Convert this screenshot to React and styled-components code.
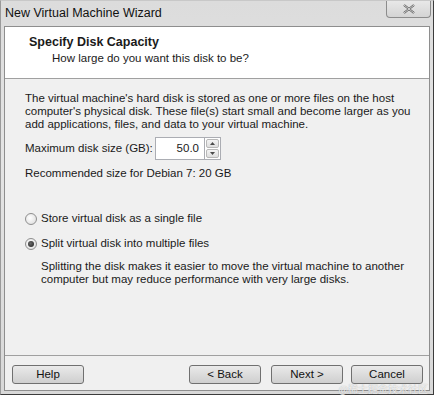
import React from "react";
import styled, { createGlobalStyle } from "styled-components";

const GlobalStyle = createGlobalStyle`
  html, body {
    margin: 0;
    padding: 0;
    background: #ffffff;
  }
  body {
    font-family: "Liberation Sans", Arial, sans-serif;
    font-size: 12px;
    color: #1a1a1a;
  }
`;

const Window = styled.div`
  width: 434px;
  height: 395px;
  box-sizing: border-box;
  border: 1px solid #3c3c3c;
  border-top-color: #c8c8c8;
  border-left-color: #9a9a9a;
  background: linear-gradient(180deg, #dcdcdc 0%, #e4e4e4 40%, #d8d8d8 100%);
  display: flex;
  flex-direction: column;
`;

const TitleBar = styled.div`
  height: 25px;
  display: flex;
  align-items: flex-start;
  justify-content: space-between;
  padding-left: 4px;
`;

const TitleText = styled.span`
  margin-top: 5px;
  font-size: 12.5px;
  color: #111;
`;

const CloseButton = styled.div`
  width: 45px;
  height: 17px;
  margin-right: 2px;
  box-sizing: border-box;
  border: 1px solid #8c8c8c;
  border-top: none;
  border-radius: 0 0 4px 4px;
  background: linear-gradient(180deg, #e8e8e8, #d4d4d4);
  display: flex;
  align-items: center;
  justify-content: center;
`;

const Client = styled.div`
  flex: 1;
  margin: 0 3px 3px 3px;
  border: 1px solid #8e8e8e;
  display: flex;
  flex-direction: column;
  background: #f0f0f0;
`;

const Header = styled.div`
  height: 52px;
  background: #ffffff;
  border-bottom: 1px solid #a0a0a0;
  box-sizing: border-box;
  padding: 8px 0 0 24px;
`;

const HeaderTitle = styled.div`
  font-weight: bold;
  font-size: 12.5px;
  line-height: 15px;
`;

const HeaderSub = styled.div`
  margin-left: 23px;
  font-size: 11.5px;
  line-height: 15px;
  margin-top: 1px;
`;

const Body = styled.div`
  flex: 1;
  padding: 13px 0 0 20px;
  font-size: 11.5px;
  line-height: 13px;
`;

const Paragraph = styled.p`
  margin: 0;
`;

const SizeRow = styled.div`
  display: flex;
  align-items: center;
  margin-top: 6px;
`;

const SizeLabel = styled.span`
  width: 130px;
`;

const NumberBox = styled.div`
  width: 50px;
  height: 23px;
  box-sizing: border-box;
  border: 1px solid #abadb3;
  background: #fff;
  display: flex;
  align-items: center;
  justify-content: flex-end;
  padding-right: 5px;
`;

const Spinner = styled.div`
  width: 16px;
  height: 23px;
  display: flex;
  flex-direction: column;
  box-sizing: border-box;
  border: 1px solid #abadb3;
  border-left: none;
  background: #fff;
  padding: 1px;
  gap: 1px;
`;

const SpinPart = styled.div`
  flex: 1;
  border: 1px solid #b8b8b8;
  border-radius: 2px;
  background: linear-gradient(180deg, #f4f4f4, #dedede);
  display: flex;
  align-items: center;
  justify-content: center;
`;

const Recommended = styled.div`
  margin-top: 7px;
`;

const RadioRow = styled.label`
  display: flex;
  align-items: center;
  gap: 4px;
  margin-top: ${(p) => p.$top}px;
`;

const RadioCircle = styled.span`
  width: 12px;
  height: 12px;
  border-radius: 50%;
  box-sizing: border-box;
  border: 1px solid #8f8f8f;
  background: radial-gradient(circle at 40% 40%, #ffffff 0%, #d8d8d8 100%);
  display: flex;
  align-items: center;
  justify-content: center;

  &::after {
    content: "";
    width: 6px;
    height: 6px;
    border-radius: 50%;
    background: ${(p) => (p.$checked ? "radial-gradient(circle at 40% 40%, #6a6a6a, #1e1e1e)" : "transparent")};
  }
`;

const RadioNote = styled.p`
  margin: 10px 0 0 16px;
`;

const Footer = styled.div`
  height: 35px;
  box-sizing: border-box;
  border-top: 1px solid #a0a0a0;
  display: flex;
  align-items: flex-start;
  padding: 9px 6px 0 7px;
`;

const Spacer = styled.div`
  flex: 1;
`;

const Button = styled.button`
  width: 72px;
  height: 19px;
  margin-left: ${(p) => p.$gap || 0}px;
  box-sizing: border-box;
  border: 1px solid #707070;
  border-radius: 3px;
  background: linear-gradient(180deg, #eaeaea 0%, #dcdcdc 50%, #cfcfcf 100%);
  font-family: "Liberation Sans", Arial, sans-serif;
  font-size: 11.5px;
  color: #111;
  padding: 0;
  line-height: 17px;
`;

const Watermark = styled.span`
  position: absolute;
  right: 6px;
  bottom: 0;
  font-size: 10px;
  line-height: 12px;
  color: rgba(255, 255, 255, 0.8);
  font-family: "Noto Sans CJK SC", sans-serif;
  text-shadow: 0 0 1px #a0a0a0;
`;

const Arrow = ({ up }) => (
  <svg width="5" height="3" viewBox="0 0 5 3">
    <path d={up ? "M0 3 L2.5 0 L5 3 Z" : "M0 0 L2.5 3 L5 0 Z"} fill="#4a4a4a" />
  </svg>
);

export default function App() {
  return (
    <>
      <GlobalStyle />
      <div style={{ position: "relative", width: 434, height: 395 }}>
        <Window>
          <TitleBar>
            <TitleText>New Virtual Machine Wizard</TitleText>
            <CloseButton>
              <svg width="12" height="10" viewBox="0 0 12 10">
                <path
                  d="M1 1 L11 9 M11 1 L1 9"
                  stroke="#555"
                  strokeWidth="2.2"
                  fill="none"
                />
                <path
                  d="M1 1 L11 9 M11 1 L1 9"
                  stroke="#f4f4f4"
                  strokeWidth="0.8"
                  fill="none"
                />
              </svg>
            </CloseButton>
          </TitleBar>
          <Client>
            <Header>
              <HeaderTitle>Specify Disk Capacity</HeaderTitle>
              <HeaderSub>How large do you want this disk to be?</HeaderSub>
            </Header>
            <Body>
              <Paragraph>
                The virtual machine's hard disk is stored as one or more files on the host
                <br />
                computer's physical disk. These file(s) start small and become larger as you
                <br />
                add applications, files, and data to your virtual machine.
              </Paragraph>
              <SizeRow>
                <SizeLabel>Maximum disk size (GB):</SizeLabel>
                <NumberBox>50.0</NumberBox>
                <Spinner>
                  <SpinPart>
                    <Arrow up />
                  </SpinPart>
                  <SpinPart>
                    <Arrow />
                  </SpinPart>
                </Spinner>
              </SizeRow>
              <Recommended>Recommended size for Debian 7: 20 GB</Recommended>
              <RadioRow $top={32}>
                <RadioCircle />
                Store virtual disk as a single file
              </RadioRow>
              <RadioRow $top={12}>
                <RadioCircle $checked />
                Split virtual disk into multiple files
              </RadioRow>
              <RadioNote>
                Splitting the disk makes it easier to move the virtual machine to another
                <br />
                computer but may reduce performance with very large disks.
              </RadioNote>
            </Body>
            <Footer>
              <Button>Help</Button>
              <Spacer />
              <Button>&lt; Back</Button>
              <Button $gap={10}>Next &gt;</Button>
              <Button $gap={8}>Cancel</Button>
            </Footer>
          </Client>
        </Window>
        <Watermark>@稀土掘金技术社区</Watermark>
      </div>
    </>
  );
}
